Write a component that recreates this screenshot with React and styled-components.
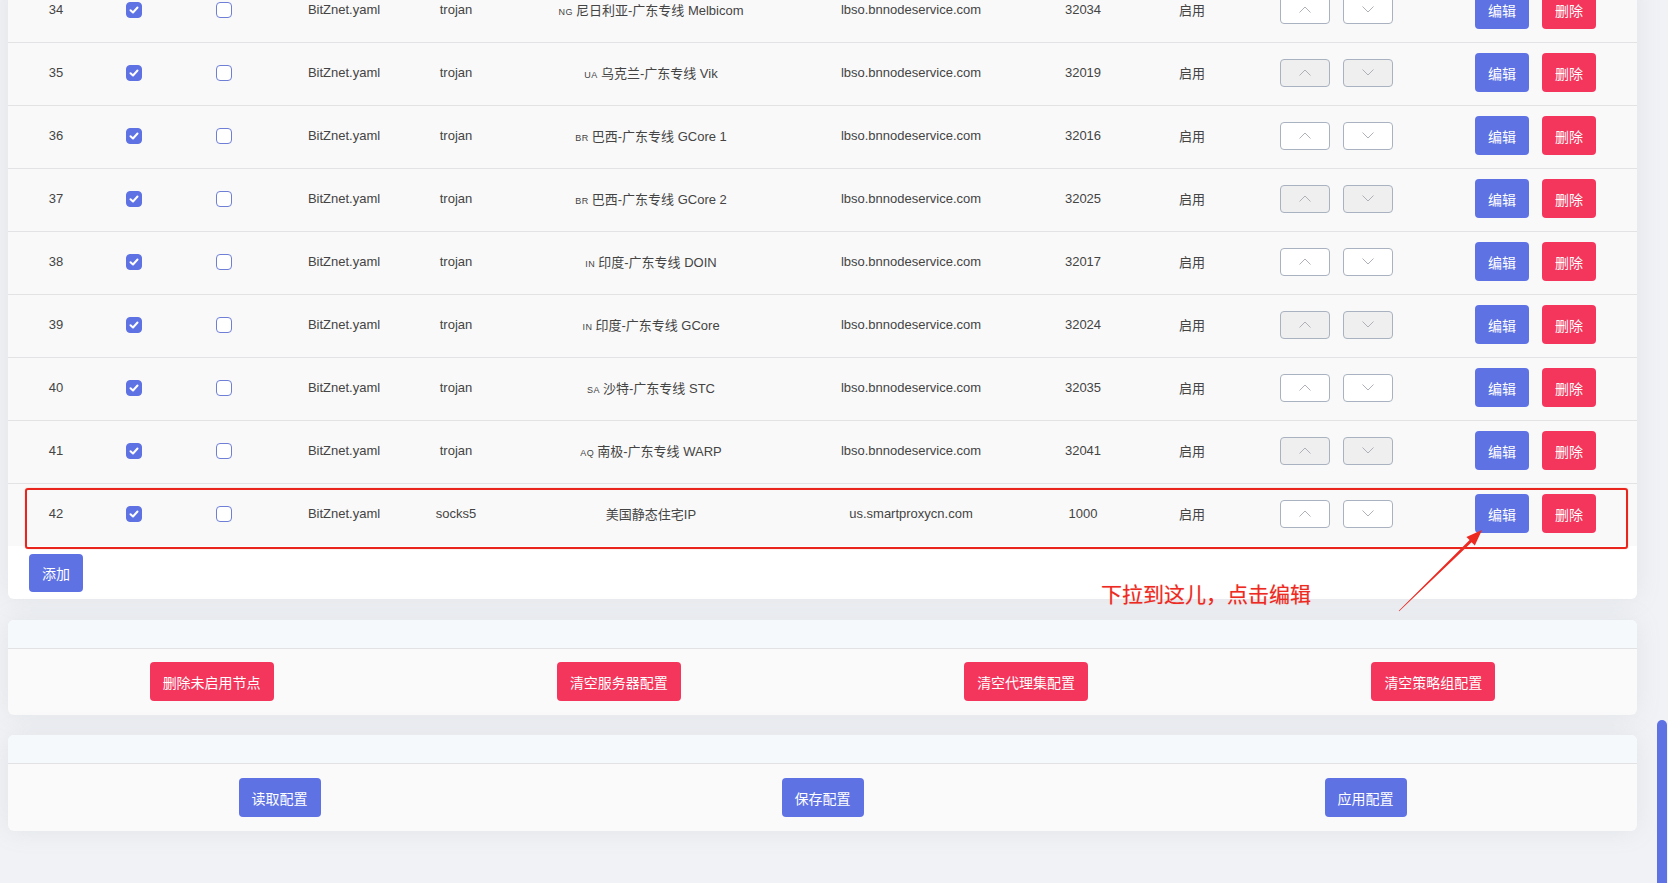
import React from 'react'
import styled, { createGlobalStyle } from 'styled-components'

const GlobalStyle = createGlobalStyle`
  html, body {
    margin: 0;
    padding: 0;
  }
  body {
    background: #f1f2f5;
    font-family: "Liberation Sans", "Noto Sans CJK SC", sans-serif;
    color: #444;
    overflow: hidden;
  }
`

const Viewport = styled.div`
  position: relative;
  height: 883px;
  overflow: hidden;
`

/* the page is scrolled, so the first visible row starts above the top edge */
const Content = styled.div`
  margin-top: -21px;
  padding: 0 31px 0 8px;
  display: flex;
  flex-direction: column;
`

const NodeCard = styled.div`
  background: #fff;
  border-radius: 0 0 6px 6px;
  box-shadow: 0 0 24px 0 rgba(136, 152, 170, 0.15);
`

const Row = styled.div`
  display: grid;
  grid-template-columns: 96px 60px 120px 120px 104px 286px 234px 110px 108px 181px 1fr;
  align-items: center;
  box-sizing: border-box;
  height: 63px;
  padding-bottom: 3px;
  border-top: 1px solid #e3e3e6;
  background: #f9f9f9;
`

const Cell = styled.div`
  display: flex;
  align-items: center;
  justify-content: center;
  font-size: 13px;
  color: #444;
  white-space: nowrap;
`

const ActionCell = styled(Cell)`
  justify-content: flex-start;
  padding-left: 48px;
  gap: 13px;
`

const MoveCell = styled(Cell)`
  gap: 13px;
`

const Flag = styled.span`
  font-size: 9px;
  letter-spacing: 0.5px;
  margin-right: 3px;
  color: #444;
`

const Box = styled.span`
  box-sizing: border-box;
  width: 16px;
  height: 16px;
  border-radius: 4px;
  display: inline-flex;
  align-items: center;
  justify-content: center;
  background: ${p => (p.$checked ? '#5e72e4' : '#fff')};
  border: 1px solid ${p => (p.$checked ? '#5e72e4' : '#6f7fd6')};
`

const MoveBtn = styled.button`
  box-sizing: border-box;
  width: 50px;
  height: 28px;
  padding: 0;
  border: 1px solid #a9b2c0;
  border-radius: 4px;
  background: ${p => (p.$muted ? '#efefef' : '#fff')};
  display: flex;
  align-items: center;
  justify-content: center;
`

const Btn = styled.button`
  height: ${p => p.$h || 39}px;
  padding: 0 13px;
  border: none;
  border-radius: 4px;
  color: #fff;
  font-family: "Liberation Sans", "Noto Sans CJK SC", sans-serif;
  font-size: 14px;
  background: ${p => (p.$danger ? '#f5365c' : '#5e72e4')};
  white-space: nowrap;
`

const AddBar = styled.div`
  padding: 8px 0 7px 21px;
`

const SectionCard = styled.div`
  margin-top: ${p => p.$gap}px;
  background: #fafafa;
  border-radius: 6px;
  box-shadow: 0 0 24px 0 rgba(136, 152, 170, 0.15);
  overflow: hidden;
`

const SectionHeader = styled.div`
  height: 28px;
  background: #f6f9fc;
  border-bottom: 1px solid #e2e2e4;
`

const SectionBody = styled.div`
  display: grid;
  grid-template-columns: repeat(${p => p.$cols}, 1fr);
  justify-items: center;
  align-items: start;
  height: ${p => p.$h}px;
  padding-top: ${p => p.$pt}px;
  box-sizing: border-box;
`

const Highlight = styled.div`
  position: absolute;
  left: 25px;
  top: 488px;
  width: 1603px;
  height: 61px;
  box-sizing: border-box;
  border: 2.5px solid #e8261e;
  border-radius: 3px;
  box-shadow: 0 0 1px rgba(232, 38, 30, 0.6);
  pointer-events: none;
`

const Note = styled.div`
  position: absolute;
  left: 1101px;
  top: 581px;
  font-family: "Noto Sans CJK SC", sans-serif;
  font-size: 21px;
  line-height: 25px;
  color: #ec2a22;
  text-shadow: 0 0 1px rgba(236, 42, 34, 0.4);
`

const Pointer = styled.svg`
  position: absolute;
  left: 1390px;
  top: 520px;
  width: 100px;
  height: 100px;
`

const ScrollThumb = styled.div`
  position: absolute;
  right: 1px;
  top: 720px;
  width: 10px;
  height: 180px;
  border-radius: 5px;
  background: #5e72e4;
`

const Check = () => (
  <svg width="10" height="8" viewBox="0 0 10 8">
    <polyline points="1.5,4.2 4,6.5 8.5,1.5" fill="none" stroke="#fff" strokeWidth="2" strokeLinecap="round" strokeLinejoin="round" />
  </svg>
)

const Chevron = ({ up }) => (
  <svg width="12" height="7" viewBox="0 0 12 7">
    <polyline points={up ? '0.5,6.5 6,1 11.5,6.5' : '0.5,0.5 6,6 11.5,0.5'} fill="none" stroke="#aeb1b8" strokeWidth="1" />
  </svg>
)

const nodes = [
  { id: 34, type: 'trojan', flag: 'NG', name: '尼日利亚-广东专线 Melbicom', host: 'lbso.bnnodeservice.com', port: 32034 },
  { id: 35, type: 'trojan', flag: 'UA', name: '乌克兰-广东专线 Vik', host: 'lbso.bnnodeservice.com', port: 32019 },
  { id: 36, type: 'trojan', flag: 'BR', name: '巴西-广东专线 GCore 1', host: 'lbso.bnnodeservice.com', port: 32016 },
  { id: 37, type: 'trojan', flag: 'BR', name: '巴西-广东专线 GCore 2', host: 'lbso.bnnodeservice.com', port: 32025 },
  { id: 38, type: 'trojan', flag: 'IN', name: '印度-广东专线 DOIN', host: 'lbso.bnnodeservice.com', port: 32017 },
  { id: 39, type: 'trojan', flag: 'IN', name: '印度-广东专线 GCore', host: 'lbso.bnnodeservice.com', port: 32024 },
  { id: 40, type: 'trojan', flag: 'SA', name: '沙特-广东专线 STC', host: 'lbso.bnnodeservice.com', port: 32035 },
  { id: 41, type: 'trojan', flag: 'AQ', name: '南极-广东专线 WARP', host: 'lbso.bnnodeservice.com', port: 32041 },
  { id: 42, type: 'socks5', flag: '', name: '美国静态住宅IP', host: 'us.smartproxycn.com', port: 1000 },
]

const NodeRow = ({ node, muted }) => (
  <Row>
    <Cell>{node.id}</Cell>
    <Cell><Box $checked><Check /></Box></Cell>
    <Cell><Box /></Cell>
    <Cell>BitZnet.yaml</Cell>
    <Cell>{node.type}</Cell>
    <Cell>
      <span>{node.flag && <Flag>{node.flag}</Flag>}{node.name}</span>
    </Cell>
    <Cell>{node.host}</Cell>
    <Cell>{node.port}</Cell>
    <Cell>启用</Cell>
    <MoveCell>
      <MoveBtn $muted={muted}><Chevron up /></MoveBtn>
      <MoveBtn $muted={muted}><Chevron /></MoveBtn>
    </MoveCell>
    <ActionCell>
      <Btn>编辑</Btn>
      <Btn $danger>删除</Btn>
    </ActionCell>
  </Row>
)

export default function App() {
  return (
    <Viewport>
      <GlobalStyle />
      <Content>
        <NodeCard>
          {nodes.map((n, i) => (
            <NodeRow key={n.id} node={n} muted={i % 2 === 1} />
          ))}
          <AddBar>
            <Btn $h={38}>添加</Btn>
          </AddBar>
        </NodeCard>

        <SectionCard $gap={21}>
          <SectionHeader />
          <SectionBody $cols={4} $h={66} $pt={13}>
            <Btn $danger>删除未启用节点</Btn>
            <Btn $danger>清空服务器配置</Btn>
            <Btn $danger>清空代理集配置</Btn>
            <Btn $danger>清空策略组配置</Btn>
          </SectionBody>
        </SectionCard>

        <SectionCard $gap={20}>
          <SectionHeader />
          <SectionBody $cols={3} $h={67} $pt={14}>
            <Btn>读取配置</Btn>
            <Btn>保存配置</Btn>
            <Btn>应用配置</Btn>
          </SectionBody>
        </SectionCard>
      </Content>

      <Highlight />
      <Pointer viewBox="0 0 100 100">
        <polygon
          points="92,10 84.8,25.5 81.6,22.3 9.2,91.2 8.8,90.8 79.6,20.1 76.4,16.9"
          fill="#ec2a22"
        />
      </Pointer>
      <Note>下拉到这儿，点击编辑</Note>
      <ScrollThumb />
    </Viewport>
  )
}
